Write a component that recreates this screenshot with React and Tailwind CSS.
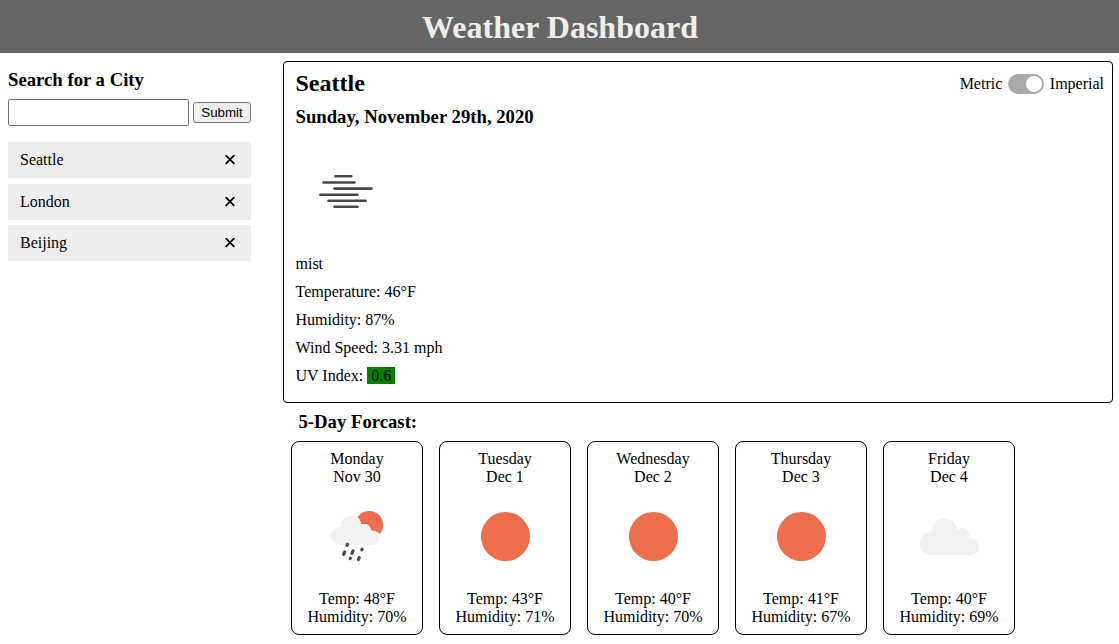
import React from "react";

const cities = ["Seattle", "London", "Beijing"];

const forecast = [
  { day: "Monday", date: "Nov 30", icon: "rain", temp: 48, humidity: 70 },
  { day: "Tuesday", date: "Dec 1", icon: "sun", temp: 43, humidity: 71 },
  { day: "Wednesday", date: "Dec 2", icon: "sun", temp: 40, humidity: 70 },
  { day: "Thursday", date: "Dec 3", icon: "sun", temp: 41, humidity: 67 },
  { day: "Friday", date: "Dec 4", icon: "cloud", temp: 40, humidity: 69 },
];

function MistIcon() {
  return (
    <svg className="block size-[100px]" viewBox="0 0 100 100" stroke="#484848" strokeWidth="2.6" strokeLinecap="round">
      <path d="M39.5 35.3H55.3M27.5 41.5H58.5M38.5 47.6H75.5M24.3 53.7H61.5M32.5 59.8H69.7M38.5 65.7H61.5" />
    </svg>
  );
}

function SunIcon() {
  return (
    <svg className="block size-[100px]" viewBox="0 0 100 100">
      <circle cx="50.5" cy="50.5" r="24.5" fill="#ec6e4c" />
    </svg>
  );
}

function CloudIcon() {
  return (
    <svg className="block size-[100px]" viewBox="0 0 100 100" fill="#f1f1ef">
      <circle cx="32.2" cy="57.8" r="11.2" />
      <circle cx="45.6" cy="44.7" r="12.4" />
      <circle cx="63.2" cy="49" r="7" />
      <circle cx="71.4" cy="60.5" r="8.5" />
      <path d="M32 50L45 45L63 47L72 58V69H32Z" />
    </svg>
  );
}

function RainIcon() {
  return (
    <svg className="block size-[100px]" viewBox="0 0 100 100">
      <circle cx="62.2" cy="38.9" r="13.9" fill="#ec6e4c" />
      <path d="M49.5 29.5C52.9 32 54.6 35 54.4 37.8C59 36.3 64.3 39.4 64.7 44.4C68.8 44 72.6 46.1 74.5 49.5L70 56H42V30Z" fill="#ffffff" />
      <path d="M50.5 30.6C53.2 33 54.6 35.5 54.4 37.8C59 36.3 64.3 39.4 64.7 44.4C68.2 44.1 71.1 45.5 73 47.8" fill="none" stroke="#e6502e" strokeWidth="0.9" />
      <g fill="#f1f1f1">
        <circle cx="33" cy="50" r="9" />
        <circle cx="43.8" cy="39.8" r="10.1" />
        <circle cx="57.7" cy="44.2" r="6.4" />
        <circle cx="65" cy="51.7" r="7.3" />
        <path d="M33 43L44 39L57 41L65 47V59H33Z" />
      </g>
      <g stroke="#484848" strokeWidth="3.2" strokeLinecap="round">
        <path d="M40.4 58.3L39.9 59.4M37.7 66L36.6 68.4M46.1 65L44.9 67.4M55.1 63.2L54.8 63.8M43.4 72.1L43.2 72.5M52.3 71.6L51.4 73.5" />
      </g>
    </svg>
  );
}

const icons = { rain: RainIcon, sun: SunIcon, cloud: CloudIcon };

function SearchPanel() {
  return (
    <aside className="ml-2 mt-[17px] w-[243px] shrink-0">
      <h3 className="text-[18.72px] leading-5 font-bold">Search for a City</h3>
      <form className="mt-[9px] flex items-center gap-1">
        <input aria-label="City" className="h-[27px] w-[181px] rounded-[2px] border border-[#767676] bg-white px-1" />
        <button
          type="button"
          className="h-[21px] w-[58px] rounded-[3px] border border-[#767676] bg-[#efefef] font-['Liberation_Sans',sans-serif] text-[13.333px] leading-[15px]"
        >
          Submit
        </button>
      </form>
      <ul className="mt-4 flex flex-col gap-[5.6px]">
        {cities.map((city) => (
          <li key={city} className="flex h-9 items-center justify-between bg-[#eeeeee] pr-4 pl-3">
            <span>{city}</span>
            <svg className="size-[10px]" viewBox="0 0 10 10" stroke="black" strokeWidth="1.8">
              <path d="M0.7 0.2L9.3 8.8M9.3 0.2L0.7 8.8" />
            </svg>
          </li>
        ))}
      </ul>
    </aside>
  );
}

function CurrentWeather() {
  return (
    <section className="h-[342px] rounded-[4px] border border-black pt-2 pr-2 pl-[11.5px]">
      <div className="flex items-start justify-between">
        <h2 className="text-2xl leading-[26px] font-bold">Seattle</h2>
        <div className="mt-1 flex h-5 items-center">
          <span>Metric</span>
          <span className="mr-1.5 ml-[5.5px] flex h-5 w-9 items-center justify-end rounded-full bg-[#aaaaaa] p-0.5">
            <span className="size-4 rounded-full bg-white" />
          </span>
          <span>Imperial</span>
        </div>
      </div>
      <h3 className="mt-[11px] text-[18.72px] leading-5 font-bold">Sunday, November 29th, 2020</h3>
      <div className="mt-[14px]">
        <MistIcon />
      </div>
      <div className="mt-[9px] leading-7">
        <p>mist</p>
        <p>Temperature: 46°F</p>
        <p>Humidity: 87%</p>
        <p>Wind Speed: 3.31 mph</p>
        <p>
          UV Index: <span className="bg-[#008000] px-1">0.6</span>
        </p>
      </div>
    </section>
  );
}

function ForecastCard({ day, date, icon, temp, humidity }) {
  const Icon = icons[icon];
  return (
    <article className="flex h-[194px] w-[132px] flex-col items-center rounded-lg border border-black pt-2 leading-[18px]">
      <p>{day}</p>
      <p>{date}</p>
      <Icon />
      <p className="mt-1">Temp: {temp}°F</p>
      <p>Humidity: {humidity}%</p>
    </article>
  );
}

export default function App() {
  return (
    <div className="h-[644px] overflow-hidden bg-white font-['Liberation_Serif',serif] text-base leading-[18px] text-black">
      <header className="flex h-[53px] items-center justify-center bg-[#666666] pl-px">
        <h1 className="text-[32px] leading-9 font-bold text-[#eeeeee]">Weather Dashboard</h1>
      </header>
      <div className="flex">
        <SearchPanel />
        <main className="mt-2 ml-8 w-[830px]">
          <CurrentWeather />
          <h3 className="mt-[9px] ml-[15.5px] text-[18.72px] leading-5 font-bold">5-Day Forcast:</h3>
          <div className="mt-[9px] ml-2 flex gap-4">
            {forecast.map((entry) => (
              <ForecastCard key={entry.day} {...entry} />
            ))}
          </div>
        </main>
      </div>
    </div>
  );
}
